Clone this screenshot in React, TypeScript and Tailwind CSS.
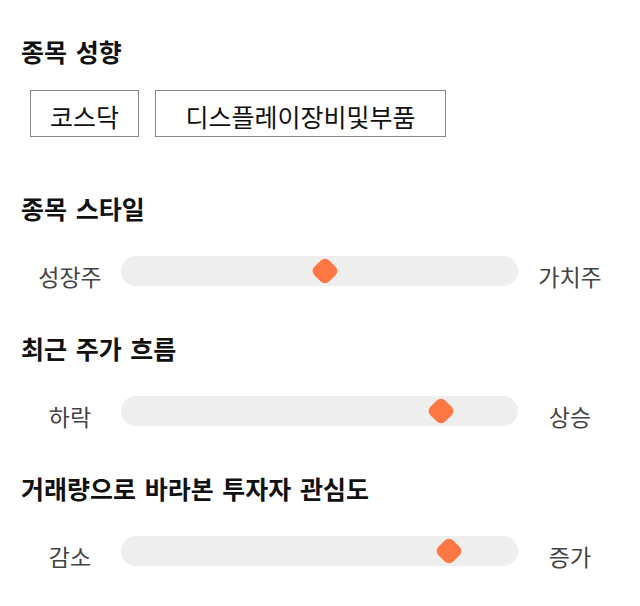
import React from "react";

interface SliderRowProps {
    left: string;
    right: string;
    thumbClass: string;
}

const SliderRow: React.FC<SliderRowProps> = ({ left, right, thumbClass }) => {
    return (
        <div className="flex items-center h-[30px] mt-[33px] px-[20px]">
            <div className="w-[100px] text-center text-[23px] leading-[30px] pt-[9px] text-[#444]">{left}</div>
            <div className="relative h-[30px] flex-1 bg-[#eeeeee] rounded-full ml-[1px] mr-[2px]">
                <div
                    className={`absolute top-1/2 w-[21px] h-[21px] bg-[#ff7843] rounded-[6px] -translate-x-1/2 -translate-y-1/2 rotate-45 ${thumbClass}`}
                />
            </div>
            <div className="w-[100px] text-center text-[23px] leading-[30px] pt-[9px] text-[#444]">{right}</div>
        </div>
    );
};

const Heading: React.FC<{ children: React.ReactNode; className?: string }> = ({ children, className }) => (
    <h2 className={`px-[21px] h-[30px] leading-[30px] text-[25px] font-bold text-[#111] [word-spacing:3px] ${className ?? ""}`}>
        {children}
    </h2>
);

export default function App() {
    return (
        <div
            className="w-[640px] h-[606px] bg-white pt-[36px]"
            style={{ fontFamily: '"Noto Sans CJK KR", "Noto Sans", sans-serif' }}
        >
            <Heading>종목 성향</Heading>
            <div className="flex gap-[16px] pl-[30px] mt-[24px]">
                <div className="w-[109px] h-[47px] border border-[#888] flex items-center justify-center pt-[6px] text-[25px] text-[#111]">
                    코스닥
                </div>
                <div className="w-[291px] h-[47px] border border-[#888] flex items-center justify-center pt-[6px] text-[25px] text-[#111]">
                    디스플레이장비및부품
                </div>
            </div>

            <Heading className="mt-[56px]">종목 스타일</Heading>
            <SliderRow left="성장주" right="가치주" thumbClass="left-[204px]" />

            <Heading className="mt-[47px]">최근 주가 흐름</Heading>
            <SliderRow left="하락" right="상승" thumbClass="left-[320px]" />

            <Heading className="mt-[47px]">거래량으로 바라본 투자자 관심도</Heading>
            <SliderRow left="감소" right="증가" thumbClass="left-[328px]" />
        </div>
    );
}
